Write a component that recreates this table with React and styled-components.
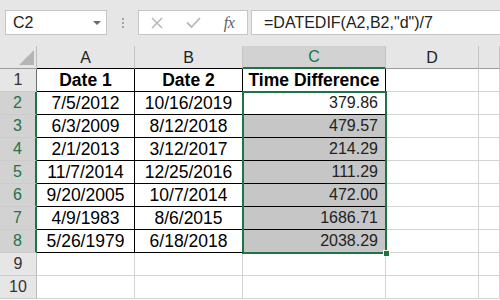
import React from "react";
import styled, { createGlobalStyle } from "styled-components";

const GREEN = "#217346";

const GlobalStyle = createGlobalStyle`
  html, body {
    margin: 0;
    padding: 0;
    background: #ffffff;
    overflow: hidden;
  }
  body {
    font-family: "Liberation Sans", Arial, sans-serif;
  }
`;

const Window = styled.div`
  width: 500px;
  height: 300px;
  overflow: hidden;
  background: #ffffff;
`;

/* formula bar */

const Toolbar = styled.div`
  height: 46px;
  box-sizing: border-box;
  padding: 10px 0 11px 5px;
  background: #e6e6e6;
  display: flex;
  align-items: stretch;
`;

const NameBox = styled.div`
  width: 102px;
  box-sizing: border-box;
  background: #ffffff;
  border: 1px solid #c6c6c6;
  display: flex;
  align-items: center;
  justify-content: space-between;
  padding: 0 5px 0 7px;
  font-size: 16px;
  color: #222;
`;

const Caret = styled.span`
  width: 0;
  height: 0;
  border-left: 4px solid transparent;
  border-right: 4px solid transparent;
  border-top: 4px solid #6a6a6a;
`;

const Grip = styled.div`
  width: 31px;
  display: flex;
  flex-direction: column;
  align-items: center;
  justify-content: center;
  gap: 2px;

  span {
    width: 2px;
    height: 2px;
    background: #a3a3a3;
  }
`;

const FxButtons = styled.div`
  width: 110px;
  box-sizing: border-box;
  background: #ffffff;
  border: 1px solid #c6c6c6;
  display: flex;
  margin-right: 3px;
`;

const FxSlot = styled.div`
  width: 36px;
  display: flex;
  align-items: center;
  justify-content: center;
`;

const FxLabel = styled.span`
  font-family: "Liberation Serif", "Times New Roman", serif;
  font-style: italic;
  font-size: 16px;
  color: #5f5f5f;
  letter-spacing: -0.5px;
`;

const FormulaInput = styled.div`
  flex: 1;
  background: #ffffff;
  border: 1px solid #c6c6c6;
  border-right: none;
  display: flex;
  align-items: center;
  padding-left: 12px;
  font-size: 16px;
  color: #222;
  white-space: nowrap;
`;

/* sheet grid */

const Sheet = styled.div`
  position: relative;
  display: grid;
  grid-template-columns: 37px 98px 108px 143px 93px 1fr;
  grid-auto-rows: 23px;
  font-size: 17.5px;
`;

const Corner = styled.div`
  position: relative;
  background: #e6e6e6;
  border-right: 1px solid #bdbdbd;
  border-bottom: 1px solid #9b9b9b;

  &::after {
    content: "";
    position: absolute;
    right: 2px;
    bottom: 3px;
    width: 0;
    height: 0;
    border-left: 15px solid transparent;
    border-bottom: 15px solid #b5b5b5;
  }
`;

const ColHead = styled.div`
  box-sizing: border-box;
  background: ${(p) => (p.$sel ? "#d2d2d2" : "#e6e6e6")};
  color: ${(p) => (p.$sel ? GREEN : "#222")};
  border-right: 1px solid #c4c4c4;
  border-bottom: ${(p) =>
    p.$sel ? `2px solid ${GREEN}` : p.$boxed ? "1px solid #000" : "1px solid #9b9b9b"};
  display: flex;
  align-items: center;
  justify-content: center;
  font-size: 16px;
  padding-top: 1px;
`;

const RowHead = styled.div`
  box-sizing: border-box;
  background: ${(p) => (p.$sel ? "#d2d2d2" : "#e6e6e6")};
  color: ${(p) => (p.$sel ? GREEN : "#333")};
  border-right: ${(p) =>
    p.$sel ? `2px solid ${GREEN}` : p.$boxed ? "1px solid #6e6e6e" : "1px solid #bdbdbd"};
  border-bottom: 1px solid #cbcbcb;
  display: flex;
  align-items: center;
  justify-content: center;
  font-size: 16px;
`;

const Cell = styled.div`
  box-sizing: border-box;
  background: ${(p) => (p.$shade ? "#c6c6c6" : "#ffffff")};
  color: ${(p) => (p.$num ? "#222" : "#000")};
  font-size: ${(p) => (p.$num ? "16px" : "17.5px")};
  font-weight: ${(p) => (p.$bold ? 700 : 400)};
  border-right: 1px solid ${(p) => (p.$boxed ? "#000" : "#d4d4d4")};
  border-bottom: 1px solid ${(p) => (p.$boxed ? "#000" : "#d4d4d4")};
  display: flex;
  align-items: center;
  justify-content: ${(p) => (p.$num ? "flex-end" : "center")};
  padding-right: ${(p) => (p.$num ? "7px" : "0")};
  white-space: nowrap;
  overflow: visible;
`;

/* active range outline, laid over C2:C8 */
const Selection = styled.div`
  position: absolute;
  grid-column: 4 / 5;
  grid-row: 3 / 10;
  inset: -1px;
  border: 2px solid ${GREEN};
  pointer-events: none;
  z-index: 2;
`;

const FillHandle = styled.span`
  position: absolute;
  right: -5px;
  bottom: -5px;
  width: 5px;
  height: 5px;
  background: ${GREEN};
  border: 1px solid #ffffff;
`;

const rows = [
  ["7/5/2012", "10/16/2019", "379.86"],
  ["6/3/2009", "8/12/2018", "479.57"],
  ["2/1/2013", "3/12/2017", "214.29"],
  ["11/7/2014", "12/25/2016", "111.29"],
  ["9/20/2005", "10/7/2014", "472.00"],
  ["4/9/1983", "8/6/2015", "1686.71"],
  ["5/26/1979", "6/18/2018", "2038.29"],
];

const CrossIcon = () => (
  <svg width="12" height="12" viewBox="0 0 12 12">
    <path d="M1 1 L11 11 M11 1 L1 11" stroke="#b9b9b9" strokeWidth="1.6" fill="none" />
  </svg>
);

const CheckIcon = () => (
  <svg width="15" height="11" viewBox="0 0 15 11">
    <path d="M1 5.5 L5.5 10 L14 1" stroke="#b9b9b9" strokeWidth="1.8" fill="none" />
  </svg>
);

export default function App() {
  return (
    <Window>
      <GlobalStyle />
      <Toolbar>
        <NameBox>
          C2
          <Caret />
        </NameBox>
        <Grip>
          <span />
          <span />
          <span />
        </Grip>
        <FxButtons>
          <FxSlot>
            <CrossIcon />
          </FxSlot>
          <FxSlot>
            <CheckIcon />
          </FxSlot>
          <FxSlot>
            <FxLabel>fx</FxLabel>
          </FxSlot>
        </FxButtons>
        <FormulaInput>=DATEDIF(A2,B2,"d")/7</FormulaInput>
      </Toolbar>

      <Sheet>
        <Corner />
        <ColHead $boxed>A</ColHead>
        <ColHead $boxed>B</ColHead>
        <ColHead $sel>C</ColHead>
        <ColHead>D</ColHead>
        <ColHead />

        <RowHead $boxed>1</RowHead>
        <Cell $boxed $bold>Date 1</Cell>
        <Cell $boxed $bold>Date 2</Cell>
        <Cell $boxed $bold>Time Difference</Cell>
        <Cell />
        <Cell />

        {rows.map(([a, b, c], i) => (
          <React.Fragment key={a}>
            <RowHead $sel>{i + 2}</RowHead>
            <Cell $boxed>{a}</Cell>
            <Cell $boxed>{b}</Cell>
            <Cell $boxed $num $shade={i > 0}>
              {c}
            </Cell>
            <Cell />
            <Cell />
          </React.Fragment>
        ))}

        {[9, 10].map((n) => (
          <React.Fragment key={n}>
            <RowHead>{n}</RowHead>
            <Cell />
            <Cell />
            <Cell />
            <Cell />
            <Cell />
          </React.Fragment>
        ))}

        <Selection>
          <FillHandle />
        </Selection>
      </Sheet>
    </Window>
  );
}
